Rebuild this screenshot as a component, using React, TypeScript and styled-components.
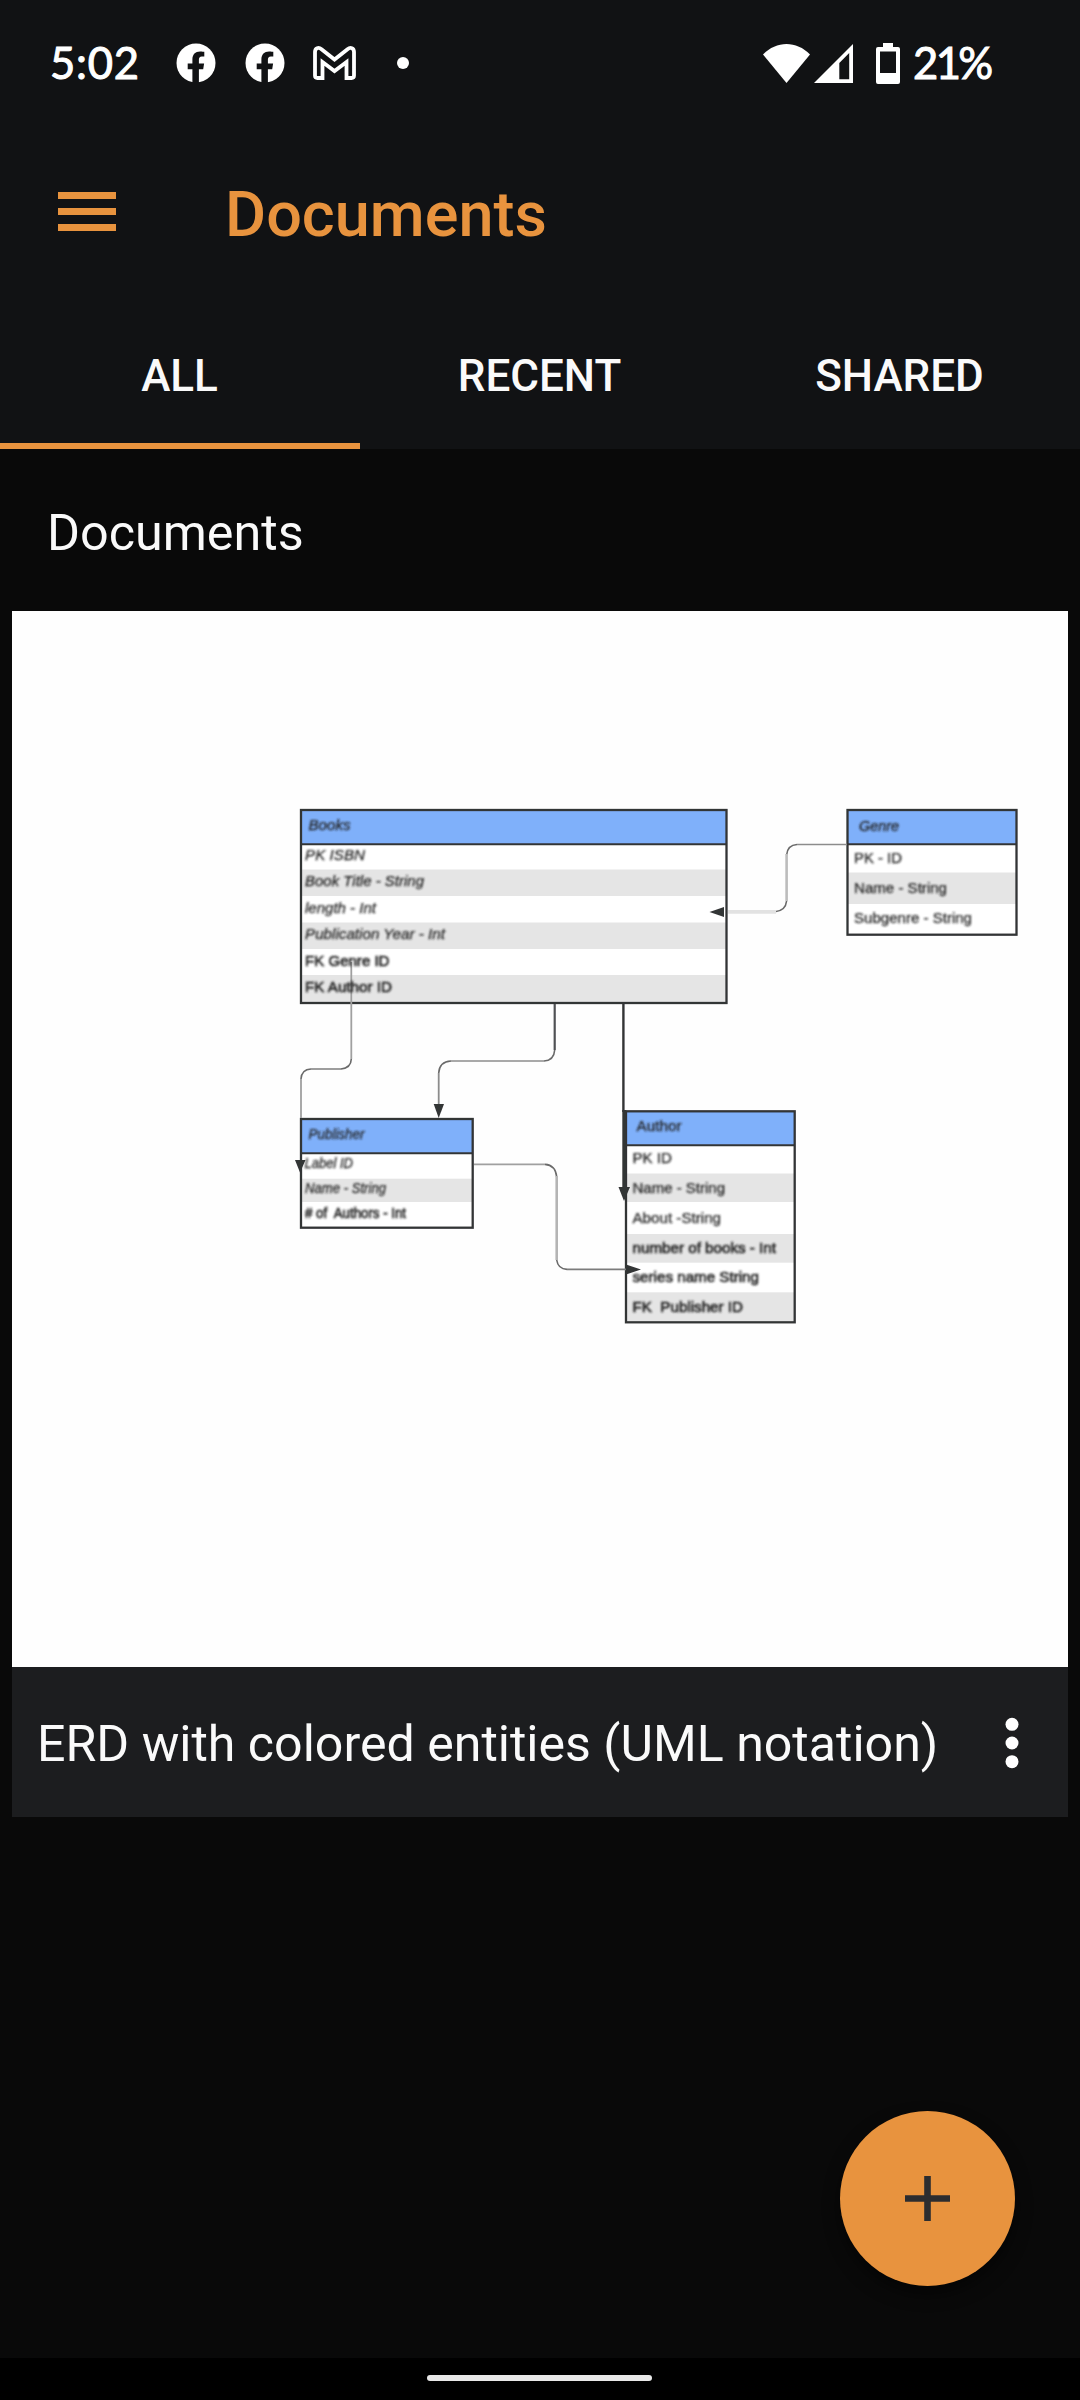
import React from 'react';
import styled, { createGlobalStyle } from 'styled-components';

const ACCENT = '#e8933e';
const INK = '#333436';

const GlobalStyle = createGlobalStyle`
  html, body { margin: 0; background: #090909; }
  * { box-sizing: border-box; }
`;

const Screen = styled.div`
  width: 1080px;
  height: 2400px;
  display: flex;
  flex-direction: column;
  overflow: hidden;
  background: #090909;
  color: #fafafa;
  font-family: Roboto, 'Liberation Sans', sans-serif;
`;

const Header = styled.header`
  height: 449px;
  flex: none;
  background: #111214;
  display: flex;
  flex-direction: column;
`;

const StatusBar = styled.div`
  height: 126px;
  padding: 0 89px 0 50px;
  display: flex;
  align-items: center;
  justify-content: space-between;
  color: #fff;
`;

const StatusGroup = styled.div`
  display: flex;
  align-items: center;
`;

const StatusText = styled.span<{ $width: number; $spacing: number }>`
  width: ${(p) => p.$width}px;
  padding-bottom: 2px;
  font: 400 43.5px/52px Lato, sans-serif;
  letter-spacing: ${(p) => p.$spacing}px;
  -webkit-text-stroke: 1px #fff;
  white-space: nowrap;
`;

const Icon = styled.svg<{ $left?: number }>`
  display: block;
  flex: none;
  margin-left: ${(p) => p.$left ?? 0}px;
`;

const AppBar = styled.div`
  height: 174px;
  display: flex;
  align-items: center;
  padding: 0 0 0 58px;
`;

const Menu = styled.button`
  width: 58px;
  height: 39px;
  margin: 0 109px 3px 0;
  padding: 0;
  border: 0;
  background: none;
  display: flex;
  flex-direction: column;
  gap: 9px;
`;

const MenuBar = styled.span`
  height: 7px;
  width: 58px;
  flex: none;
  background: ${ACCENT};
`;

const Title = styled.h1`
  margin: 3px 0 0;
  color: ${ACCENT};
  font-size: 63px;
  line-height: 74px;
  font-weight: 500;
`;

const Tabs = styled.nav`
  flex: 1;
  display: grid;
  grid-template-columns: repeat(3, 1fr);
`;

const Tab = styled.div<{ $active?: boolean }>`
  display: flex;
  align-items: center;
  justify-content: center;
  padding: 8px 1px 0 0;
  border-bottom: 6px solid ${(p) => (p.$active ? ACCENT : 'transparent')};
  font-size: 44px;
  line-height: 52px;
  font-weight: 500;
`;

const Content = styled.main`
  flex: 1;
  padding: 0 12px;
`;

const SectionTitle = styled.h2`
  height: 162px;
  margin: 0;
  padding: 4px 0 0 35px;
  display: flex;
  align-items: center;
  font-size: 50.3px;
  font-weight: 400;
`;

const Card = styled.article`
  width: 1056px;
  background: #1c1d1f;
`;

const Preview = styled.svg`
  display: block;
  width: 1056px;
  height: 1056px;
  background: #fefefe;
  font-family: 'Liberation Sans', Arial, sans-serif;
`;

const CardFooter = styled.footer`
  height: 150px;
  padding: 1px 47px 0 25px;
  display: flex;
  align-items: center;
  justify-content: space-between;
  font-size: 50.1px;
  line-height: 60px;
  white-space: nowrap;
`;

const FileName = styled.span`
  padding-top: 2px;
`;

const NavBar = styled.div`
  height: 42px;
  flex: none;
  background: #000;
  display: flex;
  justify-content: center;
  padding: 17px 1px 0 0;
`;

const Pill = styled.div`
  width: 225px;
  height: 6px;
  border-radius: 3px;
  background: #e8e8e8;
`;

const Fab = styled.button`
  position: absolute;
  left: 840px;
  top: 2111px;
  width: 175px;
  height: 175px;
  padding: 0;
  border: 0;
  border-radius: 50%;
  background: ${ACCENT};
  box-shadow: 0 8px 16px rgba(0, 0, 0, 0.5);
  display: flex;
  align-items: center;
  justify-content: center;
`;

const FacebookIcon = ({ left }: { left: number }) => (
  <Icon $left={left} width="40" height="40" viewBox="0 0 40 40">
    <circle cx="20" cy="20" r="19.5" fill="#fff" />
    <path
      d="M16.4 40V26.2H11.7V20.6H16.4V16.6C16.4 11.2 19.3 8.4 24.1 8.4C25.9 8.4 28.3 8.8 28.3 8.8V13.5H25.9C23.6 13.5 22.9 14.9 22.9 16.6V20.6H28.1L27.2 26.2H22.9V40Z"
      fill="#111214"
    />
  </Icon>
);

type Line = { text: string; x: number; y: number; w: number; italic?: boolean; heavy?: boolean; size?: number };
type Entity = {
  x: number;
  y: number;
  w: number;
  h: number;
  divider: number;
  bands: [number, number][];
  lines: Line[];
};

const entities: Entity[] = [
  {
    x: 301, y: 810, w: 425.5, h: 193, divider: 844.3,
    bands: [[869.5, 896], [922.5, 949], [975, 1002]],
    lines: [
      { text: 'Books', x: 308.5, y: 829.5, w: 42, italic: true, size: 14 },
      { text: 'PK ISBN', x: 305, y: 860, w: 60, italic: true },
      { text: 'Book Title - String', x: 305, y: 886, w: 119, italic: true },
      { text: 'length - Int', x: 305, y: 912.5, w: 71, italic: true },
      { text: 'Publication Year - Int', x: 305, y: 939, w: 140, italic: true },
      { text: 'FK Genre ID', x: 305, y: 965.5, w: 84.5, heavy: true },
      { text: 'FK Author ID', x: 305, y: 992, w: 87, heavy: true },
    ],
  },
  {
    x: 847.5, y: 810, w: 169, h: 124.7, divider: 844.3,
    bands: [[872.5, 904]],
    lines: [
      { text: 'Genre', x: 859, y: 831, w: 40, italic: true, size: 14 },
      { text: 'PK - ID', x: 854, y: 863, w: 48 },
      { text: 'Name - String', x: 854, y: 893, w: 93 },
      { text: 'Subgenre - String', x: 854, y: 922.5, w: 118 },
    ],
  },
  {
    x: 301, y: 1119, w: 171.7, h: 108.7, divider: 1153.3,
    bands: [[1178.7, 1202]],
    lines: [
      { text: 'Publisher', x: 308.5, y: 1139, w: 56, italic: true, size: 14 },
      { text: 'Label ID', x: 304.5, y: 1168, w: 48.5, italic: true, size: 14 },
      { text: 'Name - String', x: 305, y: 1193, w: 81, italic: true, size: 14 },
      { text: '# of\u00a0 Authors - Int', x: 305, y: 1218, w: 101, heavy: true, size: 14 },
    ],
  },
  {
    x: 626, y: 1111.3, w: 168.7, h: 211, divider: 1145.3,
    bands: [[1173.5, 1202], [1234, 1262.7], [1292.3, 1321]],
    lines: [
      { text: 'Author', x: 636.5, y: 1131, w: 45 },
      { text: 'PK ID', x: 632.5, y: 1163, w: 39.5 },
      { text: 'Name - String', x: 632.5, y: 1193, w: 92.5 },
      { text: 'About -String', x: 632.5, y: 1223, w: 88.5 },
      { text: 'number of books - Int', x: 632.5, y: 1252.5, w: 143.5, heavy: true },
      { text: 'series name String', x: 632.5, y: 1282, w: 126.5, heavy: true },
      { text: 'FK\u00a0 Publisher ID', x: 632.5, y: 1311.5, w: 110.5, heavy: true },
    ],
  },
];

const connectors: [string, string, number][] = [
  ['M351.3 962V1059', '#a0a0a0', 1.8],
  ['M351.3 1059Q351 1068 341 1069', '#6a6a6a', 1.6],
  ['M341 1069H311', '#8c8c8c', 1.7],
  ['M311 1069Q301.5 1069.5 301 1079', '#6a6a6a', 1.6],
  ['M301 1079V1118', '#a0a0a0', 1.8],
  ['M554.7 1004V1050', '#505153', 2.2],
  ['M554.7 1050Q554 1060.5 544 1061', '#6a6a6a', 1.6],
  ['M544 1061H451', '#8c8c8c', 1.7],
  ['M451 1061Q439.5 1061.5 438.7 1073', '#6a6a6a', 1.6],
  ['M438.7 1073V1106', '#8c8c8c', 1.8],
  ['M474 1164.4H545', '#a0a0a0', 1.9],
  ['M545 1164.4Q555.5 1165 556.7 1177', '#6a6a6a', 1.6],
  ['M556.7 1176V1260', '#b4b4b4', 2.6],
  ['M556.7 1260Q558 1269 567 1269.4', '#6a6a6a', 1.6],
  ['M567 1269.4H626', '#7c7c7c', 1.7],
  ['M847 844.5H797', '#8c8c8c', 1.7],
  ['M797 844.5Q787.5 845 786.6 855', '#6a6a6a', 1.6],
  ['M786.6 854V901', '#bcbcbc', 2.6],
  ['M786.6 901Q785.5 911 775 911.7', '#6a6a6a', 1.6],
  ['M776 911.9H728', '#e2e2e2', 3.6],
  ['M623.4 1004V1112', INK, 2.4],
  ['M624.3 1110V1190', INK, 4],
];

const arrowHeads = [
  'M709.5 912L724 907V917Z',
  'M433.7 1104H444L438.7 1118Z',
  'M295 1160H305.5L300 1172.5Z',
  'M626 1264.5L641 1269.5L626 1274.5Z',
  'M618.5 1187H630L624 1201Z',
];

const EntityBox = ({ e }: { e: Entity }) => (
  <g>
    <rect x={e.x} y={e.y} width={e.w} height={e.h} fill="#fff" />
    <rect x={e.x} y={e.y} width={e.w} height={e.divider - e.y} fill="#7fb0fa" />
    {e.bands.map(([top, bottom]) => (
      <rect key={top} x={e.x} y={top} width={e.w} height={bottom - top} fill="#e5e5e5" />
    ))}
    <rect x={e.x} y={e.y} width={e.w} height={e.h} fill="none" stroke={INK} strokeWidth="2.3" />
    <path d={`M${e.x} ${e.divider}H${e.x + e.w}`} stroke={INK} strokeWidth="2.1" />
  </g>
);

const Diagram = () => (
  <Preview viewBox="12 611 1056 1056">
    <defs>
      <filter id="soft" x="-2%" y="-2%" width="104%" height="104%">
        <feGaussianBlur stdDeviation="0.95 0.8" />
      </filter>
      <filter id="softLines" x="-2%" y="-2%" width="104%" height="104%">
        <feGaussianBlur stdDeviation="0.45" />
      </filter>
    </defs>
    <g filter="url(#softLines)">
      {entities.map((e) => <EntityBox key={e.lines[0].text} e={e} />)}
      {connectors.map(([d, color, width]) => (
        <path key={d} d={d} fill="none" stroke={color} strokeWidth={width} />
      ))}
      {arrowHeads.map((d) => <path key={d} d={d} fill={INK} />)}
    </g>
    <g filter="url(#soft)" fill="#222">
      {entities.flatMap((e) => e.lines).map((l) => (
        <text
          key={`${l.x}-${l.y}`}
          x={l.x}
          y={l.y}
          textLength={l.w}
          lengthAdjust="spacingAndGlyphs"
          fontSize={l.size ?? 15}
          fontStyle={l.italic ? 'italic' : 'normal'}
          stroke="#222"
          strokeWidth={l.heavy ? 0.6 : 0.25}
        >
          {l.text}
        </text>
      ))}
    </g>
  </Preview>
);

export default function App() {
  return (
    <Screen>
      <GlobalStyle />
      <Header>
        <StatusBar>
          <StatusGroup>
            <StatusText $width={90} $spacing={0.8}>5:02</StatusText>
            <FacebookIcon left={36} />
            <FacebookIcon left={29} />
            <Icon $left={28} width="43" height="34" viewBox="0 0 43 34">
              <path
                d="M2 6V29.5Q2 32 4.5 32H9.5V16L21.5 25L33.5 16V32H38.5Q41 32 41 29.5V6C41 2 37.5 .8 34.5 3.2L21.5 13.5L8.5 3.2C5.5 .8 2 2 2 6Z"
                fill="none"
                stroke="#fff"
                strokeWidth="3.8"
              />
            </Icon>
            <Icon $left={41} width="12" height="12" viewBox="0 0 12 12">
              <circle cx="6" cy="6" r="6" fill="#fff" />
            </Icon>
          </StatusGroup>
          <StatusGroup>
            <Icon width="47" height="39" viewBox="0 0 47 39">
              <path d="M0 10.5C13.5-3.5 33.5-3.5 47 10.5L23.5 39Z" fill="#fff" />
            </Icon>
            <Icon $left={4} width="39" height="39" viewBox="0 0 39 39">
              <path d="M39 0V39H0ZM35.2 9L25.3 19V35.3H35.2Z" fill="#fff" fillRule="evenodd" />
            </Icon>
            <Icon $left={23} width="24" height="41" viewBox="0 0 24 41">
              <path
                d="M7 0H17V4H22Q24 4 24 6V39Q24 41 22 41H2Q0 41 0 39V6Q0 4 2 4H7ZM4 8.5V30H20V8.5Z"
                fill="#fff"
                fillRule="evenodd"
              />
            </Icon>
            <Icon $left={13} width="0" height="1" />
            <StatusText $width={78} $spacing={-2.6}>21%</StatusText>
          </StatusGroup>
        </StatusBar>
        <AppBar>
          <Menu aria-label="Menu">
            <MenuBar />
            <MenuBar />
            <MenuBar />
          </Menu>
          <Title>Documents</Title>
        </AppBar>
        <Tabs>
          <Tab $active>ALL</Tab>
          <Tab>RECENT</Tab>
          <Tab>SHARED</Tab>
        </Tabs>
      </Header>
      <Content>
        <SectionTitle>Documents</SectionTitle>
        <Card>
          <Diagram />
          <CardFooter>
            <FileName>ERD with colored entities (UML notation)</FileName>
            <Icon width="18" height="52" viewBox="0 0 18 52">
              <circle cx="9" cy="7.3" r="6.5" fill="#fff" />
              <circle cx="9" cy="26" r="6.5" fill="#fff" />
              <circle cx="9" cy="44.7" r="6.5" fill="#fff" />
            </Icon>
          </CardFooter>
        </Card>
      </Content>
      <NavBar>
        <Pill />
      </NavBar>
      <Fab aria-label="Add">
        <Icon width="45" height="45" viewBox="0 0 45 45">
          <path d="M22.5 0V45M0 22.5H45" stroke="#2c2d2f" strokeWidth="6.6" />
        </Icon>
      </Fab>
    </Screen>
  );
}
